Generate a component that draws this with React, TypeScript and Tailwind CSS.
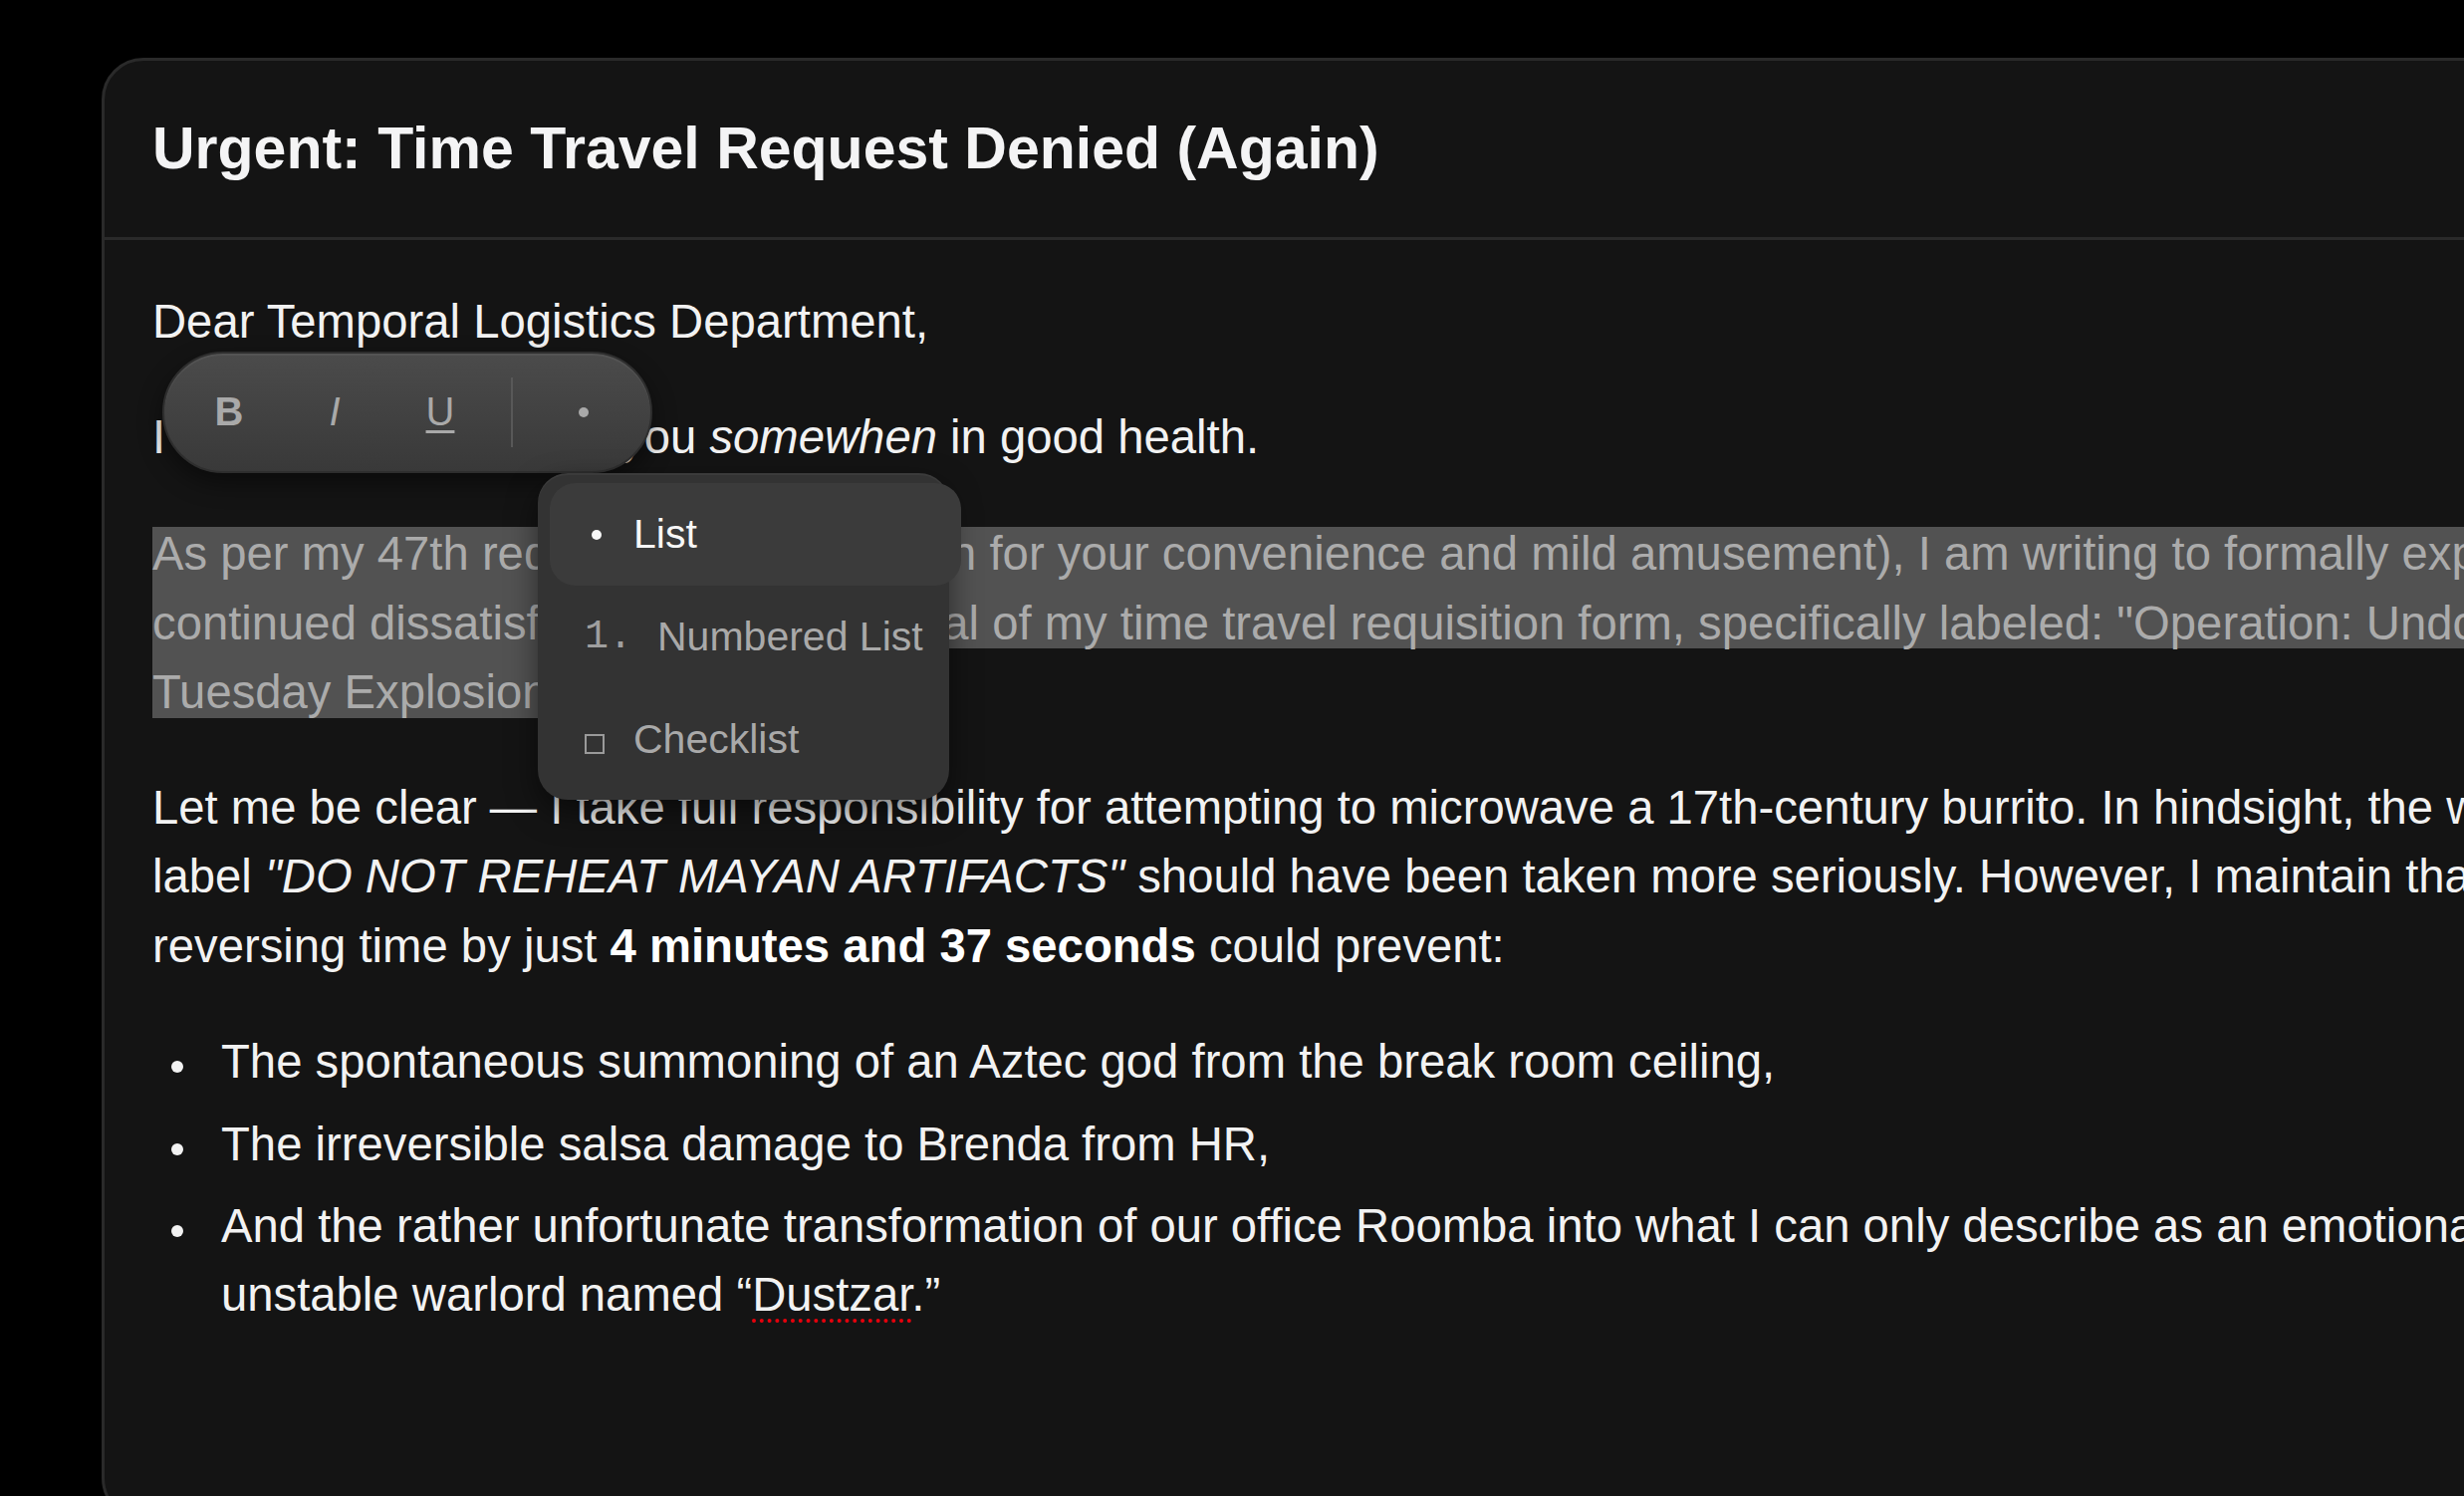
import React from 'react';

const FormatToolbar: React.FC = () => (
  <div className="absolute left-[58px] top-[112px] flex h-[122px] w-[492px] items-center gap-[16px] rounded-full border-2 border-[#2e2e2e] bg-linear-to-b from-[#4b4b4b] to-[#393939] px-[20px] text-[40px] text-[#a9a9a9] shadow-[0_10px_24px_rgba(0,0,0,0.45),inset_0_2px_0_rgba(255,255,255,0.05)]">
    <button className="flex h-[90px] w-[90px] items-center justify-center font-bold">B</button>
    <button className="flex h-[90px] w-[90px] items-center justify-center italic">I</button>
    <button className="flex h-[90px] w-[90px] items-center justify-center underline decoration-[3px] underline-offset-[5px]">U</button>
    <div className="mx-[10px] h-[70px] w-[2px] bg-[#585858]" />
    <button className="flex h-[90px] w-[90px] items-center justify-center">
      <span className="h-[10px] w-[10px] rounded-full bg-[#a9a9a9]" />
    </button>
  </div>
);

const ListMenu: React.FC = () => (
  <div className="absolute left-[435px] top-[234px] h-[328px] w-[413px] rounded-[30px] bg-[#333333] pt-[10px] text-[41px] shadow-[0_12px_30px_rgba(0,0,0,0.5),inset_0_2px_0_rgba(255,255,255,0.04)]">
    <div className="ml-[12px] flex h-[103px] w-[413px] items-center gap-[25px] rounded-[26px] bg-[#3b3b3b] pl-[35px] text-[#f7f7f7]">
      <span className="flex w-[24px] justify-center">
        <span className="h-[10px] w-[10px] rounded-full bg-[#f7f7f7]" />
      </span>
      <span>List</span>
    </div>
    <div className="ml-[12px] flex h-[103px] w-[413px] items-center gap-[25px] pl-[35px] text-[#a9a9a9]">
      <span className="font-['Liberation_Mono',monospace] text-[40px] text-[#9f9f9f]">1.</span>
      <span>Numbered List</span>
    </div>
    <div className="ml-[12px] flex h-[103px] w-[413px] items-center gap-[25px] pl-[35px] text-[#a9a9a9]">
      <span className="flex w-[24px]">
        <span className="mt-[8px] h-[20px] w-[20px] border-2 border-[#9a9a9a]" />
      </span>
      <span>Checklist</span>
    </div>
  </div>
);

const Bullet: React.FC<{ children: React.ReactNode }> = ({ children }) => (
  <li className="flex">
    <span className="w-[69px] shrink-0">
      <span className="ml-[19px] mt-[34px] block h-[12px] w-[12px] rounded-full bg-[#f2f2f2]" />
    </span>
    <span>{children}</span>
  </li>
);

const App: React.FC = () => {
  return (
    <div className="h-screen w-screen overflow-hidden bg-black pl-[102px] pt-[58px] font-['Liberation_Sans',Arial,sans-serif]">
      <div className="h-[1468px] w-[2660px] overflow-hidden rounded-[42px] border-[3px] border-[#2a2a2a] bg-[#141414]">
        <div className="flex h-[180px] items-center border-b-[3px] border-[#2a2a2a] px-[48px]">
          <h1 className="text-[59px] font-bold leading-none text-[#f4f4f5]">Urgent: Time Travel Request Denied (Again)</h1>
        </div>

        <div className="relative px-[48px] pt-[47px] text-[47.25px] leading-[69.4px] text-[#f2f2f2]">
          <div className="w-[2520px]">
            <p className="mb-[47px]">Dear Temporal Logistics Department,</p>
            <p className="mb-[47px]">
              I hope this email finds you <em>somewhen</em> in good health.
            </p>
            <p className="mb-[47px] text-[#ababab]">
              <span className="bg-[#525252]">
                As per my 47th request (attached again for your convenience and mild amusement), I am writing to formally express my{' '}
              </span>
              <span className="bg-[#525252] pt-[16.5px]">
                continued dissatisfaction with the denial of my time travel requisition form, specifically labeled: "Operation: Undo the Tuesday Explosion Incident."
              </span>
            </p>
            <p className="mb-[47px]">
              Let me be clear — I take full responsibility for attempting to microwave a 17th-century burrito. In hindsight, the warning label{' '}
              <em>"DO NOT REHEAT MAYAN ARTIFACTS"</em> should have been taken more seriously. However, I maintain that reversing time by just{' '}
              <strong className="font-bold text-white">4 minutes and 37 seconds</strong> could prevent:
            </p>
            <ul className="space-y-[13px]">
              <Bullet>The spontaneous summoning of an Aztec god from the break room ceiling,</Bullet>
              <Bullet>The irreversible salsa damage to Brenda from HR,</Bullet>
              <Bullet>
                And the rather unfortunate transformation of our office Roomba into what I can only describe as an emotionally unstable warlord named “
                <span className="underline decoration-red-600 decoration-dotted decoration-[4px] underline-offset-[8px]">Dustzar</span>.”
              </Bullet>
            </ul>
          </div>

          <FormatToolbar />
          <ListMenu />
        </div>
      </div>
    </div>
  );
};

export default App;
